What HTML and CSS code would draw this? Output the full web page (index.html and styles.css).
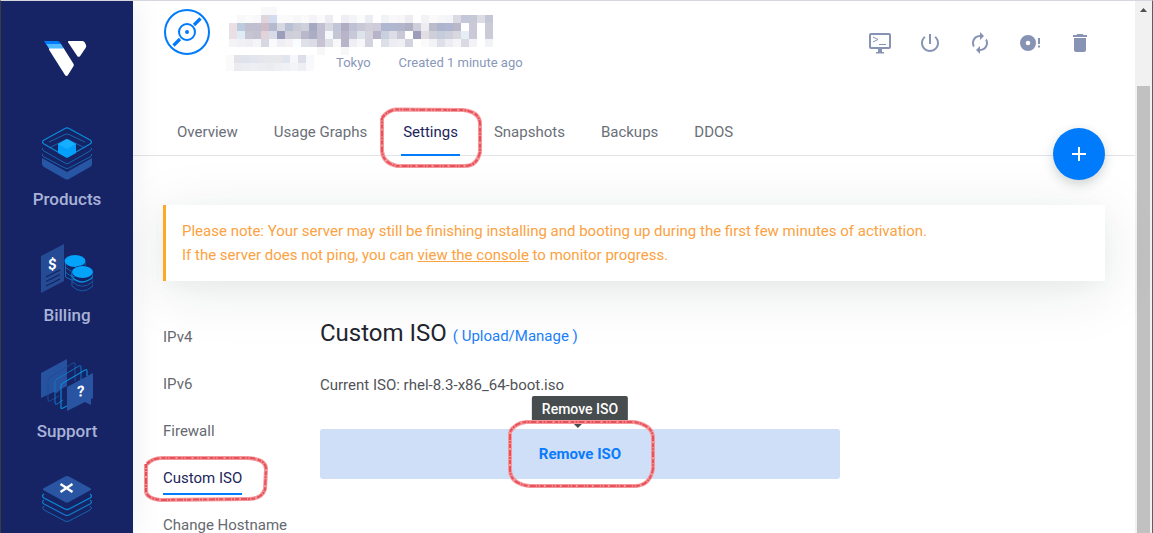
FILE: index.html
```
<!DOCTYPE html>
<html lang="en">
<head>
<meta charset="utf-8">
<title>Custom ISO</title>
<link rel="stylesheet" href="styles.css">
</head>
<body>
<div class="window">
  <nav class="sidebar" aria-label="Main">
    <a class="logo" href="#" aria-label="Home">
      <svg width="44" height="38" viewBox="0 0 44 38">
        <path d="M1 1H14.500Q16 1 17 2.500L19 5.500H3.800L1 1Z" fill="#007bfc"/>
        <path d="M3.300 4H18L21.500 9.500H6.500Z" fill="#51b9ff"/>
        <path d="M6.200 8.500H20.800L30.600 24Q31 25 30.600 26L25 35Q23.500 36.800 22 35L6.500 10.500Q5.600 9.500 6.200 8.500Z" fill="#fff"/>
        <path d="M25.500 1H39.500Q41 1 41.800 2.500L43 5Q43.500 6.500 42.700 7.800L37 16.200Q35.500 17.600 34.200 16L25.200 2.500Q24.600 1.500 25.500 1Z" fill="#fff"/>
      </svg>
    </a>
    <a class="side-item" href="#">
      <svg width="52" height="54" viewBox="0 0 52 54" fill="none">
        <path d="M1 32L26 46L51 32V38Q51 40 49 41L28 53Q26 54 24 53L3 41Q1 40 1 38Z" fill="#2756a5"/>
        <path d="M3 25L24 37Q26 38.500 28 37L49 25M3 31L24 42Q26 43 28 42L49 31M1.500 22Q1 24 3 25M50.500 22Q51 24 49 25M1.500 28Q1 30 3 31M50.500 28Q51 30 49 31M8 16L24 8.500Q26 7.500 28 8.500L44 16M8 22L24 14Q26 13 28 14L44 22" stroke="#1565ae"/>
        <path d="M3 14L24 2.500Q26 1.300 28 2.500L49 14Q52 16 49 18L28 30Q26 31 24 30L3 18Q0 16 3 14Z" stroke="#0b8ad6" stroke-width="1.300"/>
        <path d="M26 13L35 18V27L26 32L17 27V18Z" fill="#03a0fb"/>
        <path d="M26 13L35 18L26 23L17 18Z" fill="#16aefe"/>
      </svg>
      <span>Products</span>
    </a>
    <a class="side-item" href="#">
      <svg width="52" height="54" viewBox="0 0 52 54" fill="none">
        <path d="M0 14L23 2V39L0 51Z" fill="#244b94"/>
        <path d="M5 35L19 28M5 39.500L19 32.500M5 44L19 37" stroke="#13245f" stroke-width="1.200"/>
        <text x="7" y="27" class="glyph" transform="skewY(-8) translate(0 2)">$</text>
        <path d="M24.500 20V25Q34 35 44 25V20M24.500 25V30Q32 38 40 32M24.500 30V35Q30 39 35 38" stroke="#116cb7"/>
        <ellipse cx="34" cy="19" rx="10.500" ry="6" fill="#03a3fa"/>
        <path d="M31 30V35Q41 45 52 35V30" stroke="#0a91df" stroke-width="1.200"/>
        <path d="M31 34V39.500Q41 49 52 39.500V34M31 39V44Q41 54 52 44V39" stroke="#175bab"/>
        <ellipse cx="41.500" cy="30" rx="11" ry="6.500" fill="#162466"/>
        <ellipse cx="41.500" cy="30" rx="10.500" ry="6" fill="#03a3fa"/>
      </svg>
      <span>Billing</span>
    </a>
    <a class="side-item" href="#">
      <svg width="52" height="54" viewBox="0 0 52 54" fill="none">
        <path d="M0 15L26 1V28L20 31L16 35L13 34L0 40Z" fill="#2752a0"/>
        <path d="M8 20L32 5L34 5V23M8 20Q7 21 7 23V42Q7 44 9 43L18 38" stroke="#174e99"/>
        <path d="M14 45V24Q14 22 16 21L38 8Q40 7 40 9V22M14 45Q14 47 16 46L22 42" stroke="#1174bf"/>
        <path d="M20 50V28Q20 26 22 25L44 12Q46 11 46 13V18M20 50Q20 51 22 50L28 47" stroke="#0c88d4" stroke-width="1.200"/>
        <path d="M26 29L52 15V40L50 41V47L44 44L26 53Z" fill="#2854a2"/>
        <text x="36" y="40" class="glyph" transform="skewY(-5) translate(0 2)">?</text>
      </svg>
      <span>Support</span>
    </a>
    <a class="side-item" href="#" aria-label="Marketplace">
      <svg width="52" height="54" viewBox="0 0 52 54" fill="none">
        <path d="M3 20Q0 22 3 24L24 35Q26 36 28 35L49 24Q52 22 49 20" stroke="#0b8ad6" stroke-width="1.300"/>
        <path d="M3 26Q0 28 3 30L24 41Q26 42 28 41L49 30Q52 28 49 26" stroke="#107bc7" stroke-width="1.200"/>
        <path d="M3 32Q0 34 3 36L24 47Q26 48 28 47L49 36Q52 34 49 32" stroke="#1565ae"/>
        <path d="M3 14L24 2.500Q26 1.500 28 2.500L49 14Q51 15 49 16.500L28 28Q26 29 24 28L3 16.500Q1 15 3 14Z" fill="#2955a2"/>
        <path d="M19.500 10L31.500 18M31.500 10L19.500 18" stroke="#fff" stroke-width="2.400"/>
      </svg>
    </a>
  </nav>

  <main class="main">
    <header class="head">
      <svg class="disc" width="48" height="48" viewBox="0 0 48 48" fill="none" stroke="#007bfc" stroke-width="2">
        <circle cx="24" cy="24" r="22"/><circle cx="24" cy="24" r="8"/><circle cx="24" cy="24" r="2" fill="#007bfc" stroke="none"/>
        <path d="M31 17L37.500 10.500M17 31L10.500 37.500" stroke-width="3.200"/>
      </svg>
      <div class="server">
        <svg class="mask-name" width="264" height="48" viewBox="0 0 33 6" shape-rendering="crispEdges" aria-label="Hidden server name"></svg>
        <div class="meta">
          <svg class="mask-ip" width="88" height="16" viewBox="0 0 11 2" shape-rendering="crispEdges" aria-label="Hidden address"></svg>
          <span>Tokyo</span><span class="created">Created 1 minute ago</span>
        </div>
      </div>
      <div class="actions">
        <button aria-label="View console"><svg width="24" height="24" viewBox="0 0 24 24" fill="none"><rect x="2" y="3" width="20" height="14" rx="1" stroke="#8793b4" stroke-width="2"/><path d="M8 21H16V22.500H8ZM10 17H14V21H10Z" fill="#8793b4"/><path d="M5 6L10 8.500L5 11M11 13.500H18" stroke="#8793b4"/></svg></button>
        <button aria-label="Stop"><svg width="24" height="24" viewBox="0 0 24 24"><path fill="#8793b4" d="M13 3h-2v10h2V3zm4.830 2.170l-1.420 1.420C17.990 7.860 19 9.810 19 12c0 3.870-3.130 7-7 7s-7-3.130-7-7c0-2.190 1.010-4.140 2.580-5.420L6.170 5.170C4.230 6.820 3 9.260 3 12c0 4.970 4.030 9 9 9s9-4.030 9-9c0-2.740-1.230-5.180-3.170-6.830z"/></svg></button>
        <button aria-label="Restart"><svg width="24" height="24" viewBox="0 0 24 24"><path fill="#8793b4" d="M12 6v3l4-4-4-4v3c-4.420 0-8 3.580-8 8 0 1.570.46 3.030 1.240 4.260L6.700 14.800c-.45-.83-.7-1.790-.7-2.800 0-3.310 2.690-6 6-6zm6.760 1.740L17.300 9.200c.44.84.7 1.790.7 2.800 0 3.310-2.690 6-6 6v-3l-4 4 4 4v-3c4.420 0 8-3.580 8-8 0-1.570-.46-3.030-1.240-4.260z"/></svg></button>
        <button aria-label="Reinstall"><svg width="24" height="24" viewBox="0 0 24 24" fill="#8793b4"><path fill-rule="evenodd" d="M10 4A8 8 0 1 0 10 20A8 8 0 1 0 10 4ZM10 9.700A2.300 2.300 0 1 1 10 14.300A2.300 2.300 0 1 1 10 9.700Z"/><path d="M20 7H22V13H20ZM20 14.500H22V16.500H20Z"/></svg></button>
        <button aria-label="Destroy"><svg width="24" height="24" viewBox="0 0 24 24"><path fill="#8793b4" d="M6 19c0 1.100.9 2 2 2h8c1.100 0 2-.9 2-2V7H6v12zM19 4h-3.500l-1-1h-5l-1 1H5v2h14V4z"/></svg></button>
      </div>
    </header>

    <nav class="tabs" aria-label="Server">
      <a href="#">Overview</a>
      <a href="#">Usage Graphs</a>
      <a href="#" class="active" aria-current="page">Settings
        <svg class="ring ring-tab" width="104" height="64" viewBox="0 0 104 64"><path d="M3 12Q9 4 17 3.500L84 4Q101 6 101 18V46Q98 60 86 60H18Q4 57 3 45V12"/><path class="grain" d="M3 12Q9 4 17 3.500L84 4Q101 6 101 18V46Q98 60 86 60H18Q4 57 3 45V12"/></svg>
      </a>
      <a href="#">Snapshots</a>
      <a href="#">Backups</a>
      <a href="#">DDOS</a>
    </nav>
    <button class="fab" aria-label="Add"><svg width="16" height="16" viewBox="0 0 16 16"><path d="M1 8H15M8 1V15" stroke="#fff" stroke-width="2"/></svg></button>

    <div class="body">
      <div class="notice">
        <p>Please note: Your server may still be finishing installing and booting up during the first few minutes of activation.<br>If the server does not ping, you can <a href="#">view the console</a> to monitor progress.</p>
      </div>
      <div class="columns">
        <nav class="subnav" aria-label="Settings">
          <a href="#">IPv4</a>
          <a href="#">IPv6</a>
          <a href="#">Firewall</a>
          <a href="#" class="active" aria-current="page">Custom ISO
            <svg class="ring ring-sub" width="124" height="48" viewBox="0 0 124 48"><path d="M3 9Q9 3 18 3H104Q122 4 122 14L121 34Q118 44 104 44L16 45Q2 43 2 36V9"/><path class="grain" d="M3 9Q9 3 18 3H104Q122 4 122 14L121 34Q118 44 104 44L16 45Q2 43 2 36V9"/></svg>
          </a>
          <a href="#">Change Hostname</a>
        </nav>
        <section class="panel">
          <h1>Custom ISO <a href="#">( Upload/Manage )</a></h1>
          <p>Current ISO: rhel-8.3-x86_64-boot.iso</p>
          <button class="remove" aria-describedby="tip">Remove ISO
            <span class="tip" id="tip" role="tooltip">Remove ISO</span>
            <svg class="ring ring-btn" width="150" height="70" viewBox="0 0 150 70"><path d="M4 13Q9 4 20 3H128Q146 6 147 18V50Q144 66 130 67H24Q4 65 4 50V13"/><path class="grain" d="M4 13Q9 4 20 3H128Q146 6 147 18V50Q144 66 130 67H24Q4 65 4 50V13"/></svg>
          </button>
        </section>
      </div>
    </div>
  </main>

  <div class="scrollbar" aria-hidden="true">
    <svg width="17" height="17" viewBox="0 0 17 17"><path d="M5 11L8.500 7L12 11Z" fill="#505050"/></svg>
    <div class="thumb"></div>
  </div>
</div>
<script src="mosaic.js"></script>
</body>
</html>
```
FILE: styles.css
```
* { box-sizing: border-box; }
body {
  margin: 0;
  font-family: Roboto, "Liberation Sans", sans-serif;
  font-size: 15px;
  line-height: 24px;
  color: #505358;
  background: #fff;
}
a { color: inherit; text-decoration: none; }
p, h1 { margin: 0; }
button { padding: 0; border: 0; background: none; font: inherit; cursor: pointer; }
svg { display: block; }
.window {
  display: flex;
  height: 100vh;
  overflow: hidden;
  border-top: 1px solid #d5d6de;
  border-left: 1px solid #3a3c40;
  border-right: 1px solid #5c5f63;
}
.sidebar {
  flex: 0 0 132px;
  display: flex;
  flex-direction: column;
  align-items: center;
  background: #162466;
  box-shadow: 0 0 30px rgba(0, 0, 0, .08);
  z-index: 1;
}
.logo { margin: 39px 0 48px; padding-right: 4px; }
.side-item {
  flex: none;
  height: 116px;
  display: flex;
  flex-direction: column;
  align-items: center;
  gap: 7px;
  font-size: 17px;
  font-weight: 500;
  color: #a9b3d7;
}
.glyph { fill: #fff; font-size: 15px; font-weight: 700; }
.main { flex: 1; min-width: 0; position: relative; }
.head { display: flex; height: 92px; padding: 6px 43px 0 30px; }
.disc { flex: none; margin-top: 1px; }
.server { padding-left: 18px; }
.meta {
  display: flex;
  align-items: center;
  height: 16px;
  font-size: 13px;
  color: #8a97b9;
}
.mask-ip { margin: 0 22px 0 -3px; }
.created { margin-left: 28px; }
.actions { display: flex; gap: 26px; margin-left: auto; padding-top: 24px; height: 48px; }
.actions button { width: 24px; height: 24px; }
.tabs {
  position: relative;
  display: flex;
  gap: 32px;
  height: 63px;
  padding: 20px 42px 0;
  border-bottom: 1px solid #e3e4e6;
  color: #6a6f78;
}
.tabs a { flex: none; position: relative; height: 43px; line-height: 38px; padding: 0 2px; }
.tabs .active { color: #1b2559; border-bottom: 2px solid #007bfc; }
.ring { position: absolute; fill: none; stroke: #f4989c; stroke-width: 4; pointer-events: none; overflow: visible; }
.grain { stroke: #e8505a; stroke-width: 2; stroke-dasharray: 4 1 2 1 6 2; }
.ring-tab { left: -22px; top: -7px; }
.ring-sub { left: -19px; top: -8px; }
.ring-btn { left: 186px; top: -10px; }
.fab {
  position: absolute;
  right: 30px;
  top: 127px;
  width: 52px;
  height: 52px;
  border-radius: 50%;
  background: #007bfc;
  display: grid;
  place-items: center;
  box-shadow: 0 4px 12px rgba(20, 40, 40, .2);
  z-index: 2;
}
.body { padding: 49px 30px 0; }
.notice {
  padding: 14px 16px;
  border-left: 3px solid #ffa726;
  background: #fff;
  color: #fba242;
  box-shadow: 0 10px 60px rgba(20, 40, 35, .1), 0 6px 20px rgba(20, 40, 35, .03);
}
.notice a { text-decoration: underline; }
.columns { display: flex; padding-top: 40px; }
.subnav {
  flex: 0 0 157px;
  display: flex;
  flex-direction: column;
  align-items: flex-start;
  gap: 15px;
  padding-top: 1px;
  color: #66696f;
}
.subnav a { position: relative; height: 32px; line-height: 30px; white-space: nowrap; }
.subnav .active { color: #1b2559; border-bottom: 2px solid #007bfc; }
.panel { flex: 0 1 520px; }
h1 { font-size: 24px; line-height: 24px; font-weight: 400; color: #22252f; }
h1 a { font-size: 15px; color: #1a80f8; }
.panel p { padding: 25px 0 32px; }
.remove {
  position: relative;
  width: 100%;
  height: 50px;
  border-radius: 3px;
  background: #d0dff8;
  color: #0a7bfa;
  font-weight: 700;
}
.tip {
  position: absolute;
  left: 50%;
  top: -33px;
  transform: translateX(-50%);
  padding: 0 10px;
  border-radius: 2px;
  background: #474c4e;
  color: #fff;
  font-size: 14px;
  font-weight: 500;
  line-height: 27px;
  white-space: nowrap;
}
.tip::after {
  content: "";
  position: absolute;
  left: 50%;
  top: 100%;
  margin-left: -7px;
  border: 5px solid transparent;
  border-top-color: #474c4e;
}
.scrollbar { flex: 0 0 17px; background: #f1f1f1; }
.thumb { height: 100%; margin: 68px 2px 0; background: #c1c1c1; }
```
FILE: mosaic.js
```
// Each row lists the colours of consecutive cells; "-" leaves a cell empty.
const nameRows = [
  "- - - - f8f8fa f8f8fa",
  "- f8f8fa fbfbfc f8f8fb e1d5dd d3dcee fafafc fafafa f7f7fa fafafa f4f4f8 fafafa ececf2 - eeeef4 f4f4f8 fbfbfc ecedf3 - f2f3f7 f9f9fb f7f7fa ececf1 - f3f3f7 fafafb f7f7f9 f4f5f8 dadae2 c3c7d9 c6c8d6 dcdce4 c5c6d6",
  "eae0e3 bccbdf c0bfd0 c0bfd0 d0bcc8 b6bace d6d9e1 b8c0d6 c9cad7 ced0da a7a8c2 c2bfd2 d8d8e2 c2c6d9 b0adc3 bfc1d4 c9c8d6 d0cedb cfccd9 afb7d1 afb7d1 b2b5cc b0b0c5 cfcedb ececf1 bbbbca adb4ce b0b6d0 b8b8c8 - cbc9d7 - cbcbd8",
  "eae0e3 dfebf5 c8c5d3 c4c2d1 e0d3da d8dbe8 9d9dbc cfced9 d0d0da b9b7cc acadc4 c2bfd2 f6f9fc c4c5d5 b8b5ca c8c8d8 dde3eb d5d3dd b7b3c8 c8d0e0 dcdde7 c8c8d6 - 9c9cbb e2dde3 cfcfda c5cddd cfcfdc d8d8e0 e5edf5 cbc9d7 - cbcbd8",
  "f5f3f6 f0f0f5 eeeef3 f5f5f8 d8d8e3 fafafc eeeef4 f3f3f7 fafdff e0e0e9 dcdce6 c8c3d4 e0e0e9 f8f8fb b8b3c9 eeeef4 f7f7fa d2d3df - dcdfe8 ececf2 f0f0f4 d2d3df - fafafa f3f3f7 dedfe8 ececf2 f5f5f8 dadae4 f3f3f7 - f2f3f7",
  "- - - - - - - - - - - f7f7fa - - f7f7fa"
];
const ipRows = [
  "fafafb e2e3e9 dfe3eb e2e5ec e5e7ec e7e8ec e8e8ec e0e5ef f6f7fb dcdfea f7f8fb",
  "fafafb ececf0 ebedf2 eeeff3 ececf1 ebecf0 efeff2 f0f1f5 f4f4f7 eeeff3 f9f9fb"
];
function paint(svg, rows) {
  rows.forEach((row, y) => row.split(" ").forEach((colour, x) => {
    if (colour === "-") return;
    const cell = document.createElementNS("http://www.w3.org/2000/svg", "rect");
    cell.setAttribute("x", x);
    cell.setAttribute("y", y);
    cell.setAttribute("width", 1);
    cell.setAttribute("height", 1);
    cell.setAttribute("fill", "#" + colour);
    svg.append(cell);
  }));
}
paint(document.querySelector(".mask-name"), nameRows);
paint(document.querySelector(".mask-ip"), ipRows);
```
